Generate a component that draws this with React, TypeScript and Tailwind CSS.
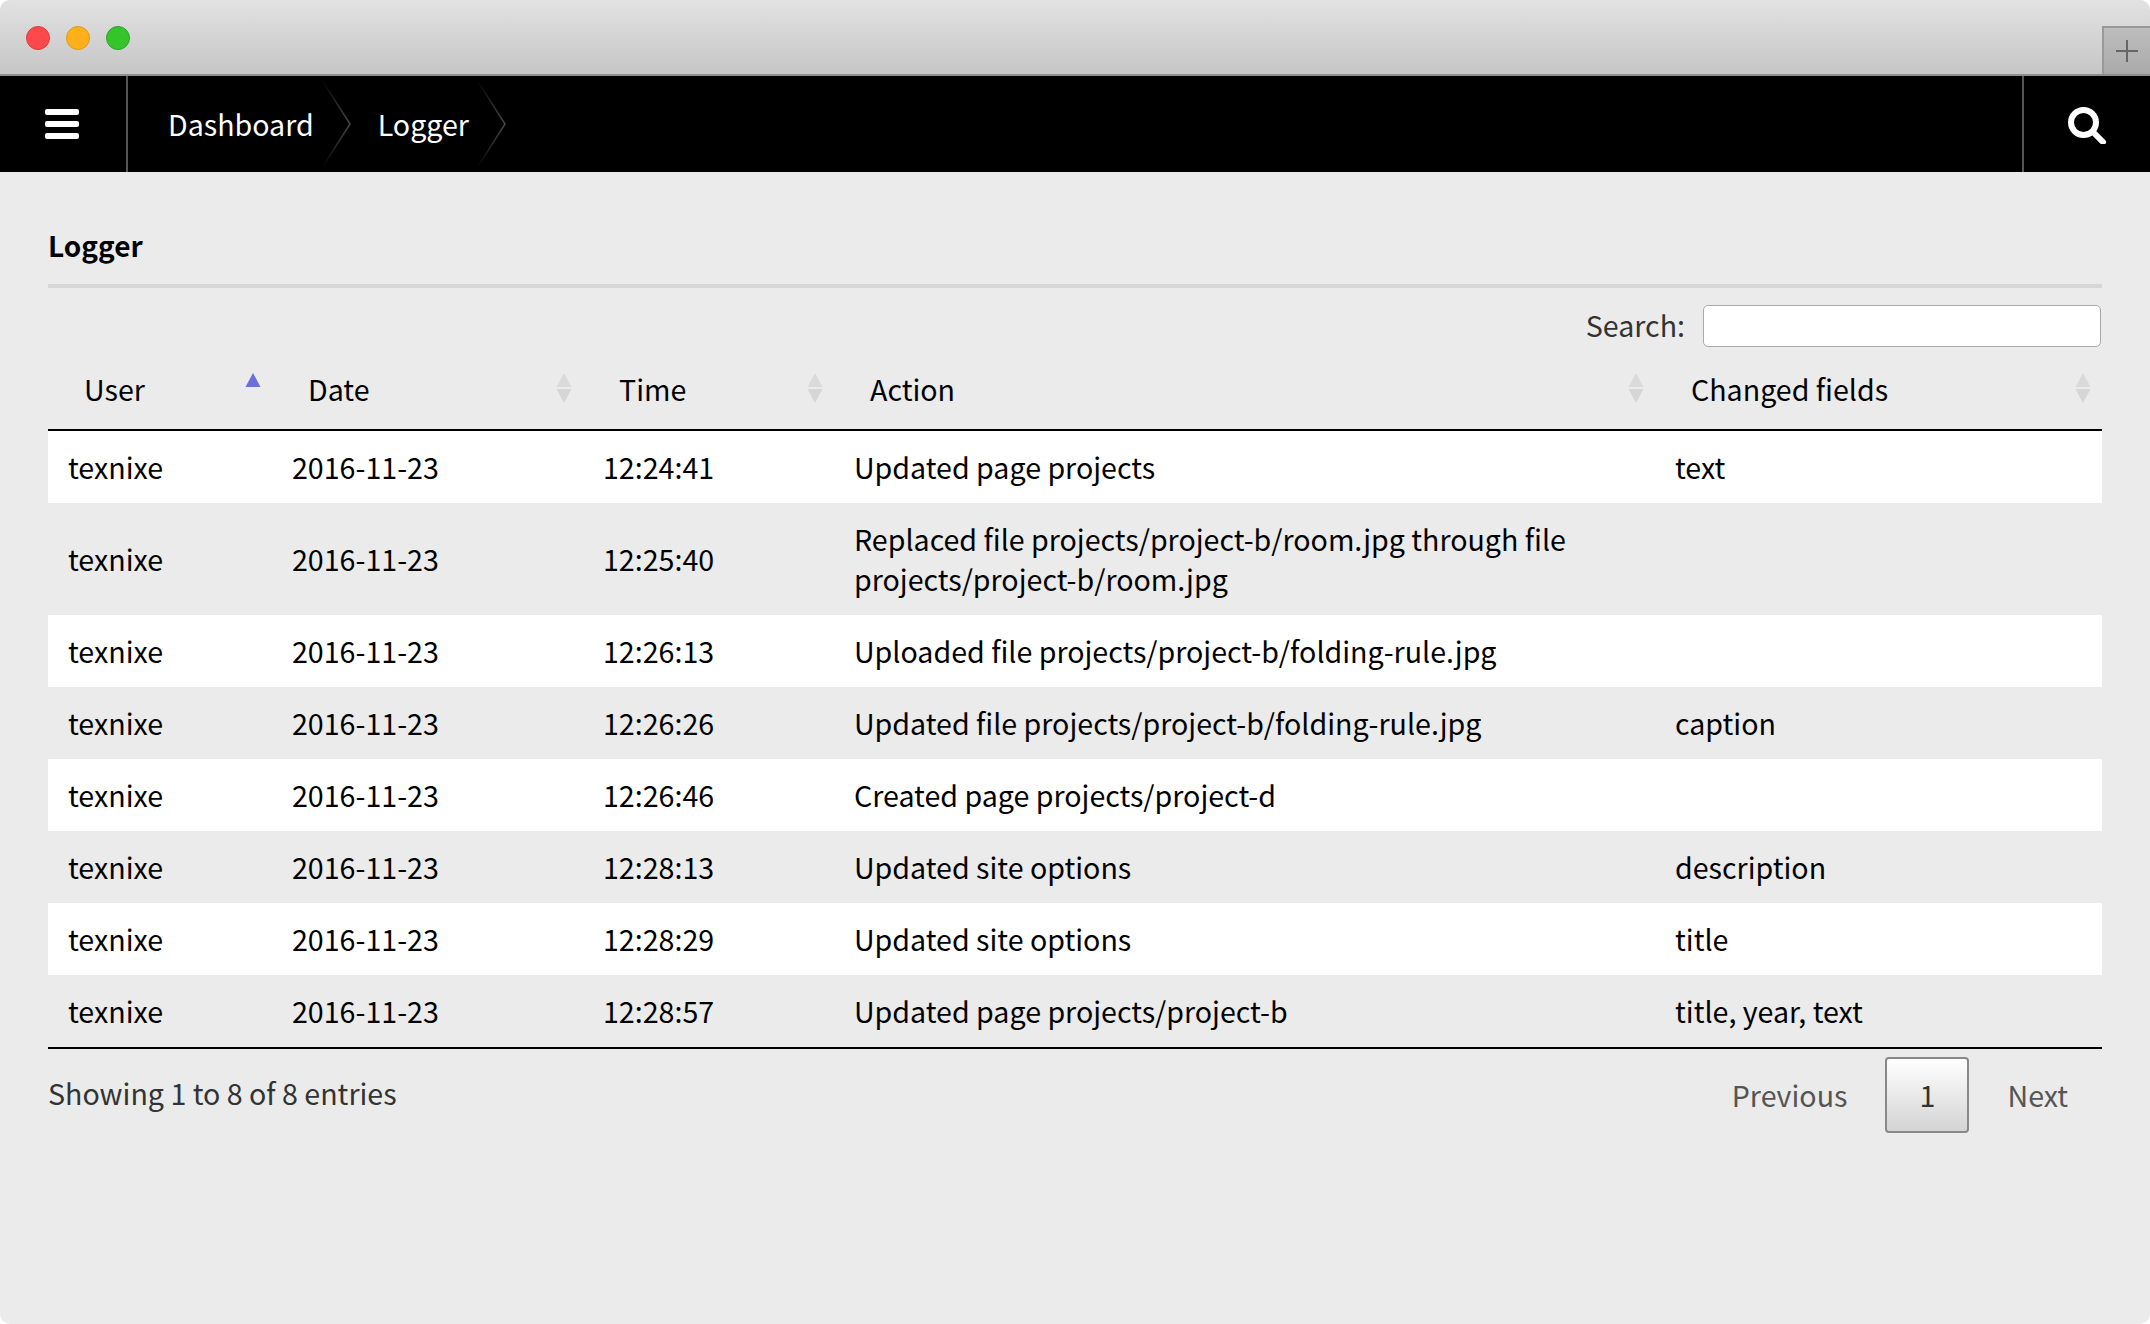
const rows = [
  { time: '12:24:41', action: 'Updated page projects', fields: 'text' },
  { time: '12:25:40', action: 'Replaced file projects/project-b/room.jpg through file projects/project-b/room.jpg', fields: '' },
  { time: '12:26:13', action: 'Uploaded file projects/project-b/folding-rule.jpg', fields: '' },
  { time: '12:26:26', action: 'Updated file projects/project-b/folding-rule.jpg', fields: 'caption' },
  { time: '12:26:46', action: 'Created page projects/project-d', fields: '' },
  { time: '12:28:13', action: 'Updated site options', fields: 'description' },
  { time: '12:28:29', action: 'Updated site options', fields: 'title' },
  { time: '12:28:57', action: 'Updated page projects/project-b', fields: 'title, year, text' },
]

const columns = ['User', 'Date', 'Time', 'Action', 'Changed fields']

function SortIcon({ active }: { active: boolean }) {
  return (
    <svg width="18" height="30" viewBox="0 0 18 30" className="absolute top-[26px] right-[10px]">
      <path d="M9 0 L16.5 14 L1.5 14 Z" fill={active ? '#6a6fdd' : '#dadada'} />
      {!active && <path d="M1.5 16 L16.5 16 L9 30 Z" fill="#d6d6d6" />}
    </svg>
  )
}

function Crumb({ label, id }: { label: string; id: string }) {
  return (
    <div className="flex items-center h-full">
      <span className="text-white">{label}</span>
      <svg width="30" height="96" viewBox="0 0 30 96" className="ml-[7px] mr-[27px]">
        <defs>
          <linearGradient id={id} x1="0" y1="0" x2="0" y2="96" gradientUnits="userSpaceOnUse">
            <stop offset="0.05" stopColor="#000000" />
            <stop offset="0.5" stopColor="#4a4a4a" />
            <stop offset="0.95" stopColor="#000000" />
          </linearGradient>
        </defs>
        <path d="M1 4 L29 48 L1 92" fill="none" stroke={`url(#${id})`} strokeWidth="1.5" />
      </svg>
    </div>
  )
}

export default function App() {
  return (
    <div className="w-[2150px] h-[1324px] bg-white overflow-hidden font-['Noto_Sans_CJK_JP','Source_Sans_Pro',sans-serif] text-[28.6px] text-black">
      <div className="h-full rounded-[10px] overflow-hidden bg-[#ebebeb] flex flex-col">
        {/* Window title bar */}
        <div className="h-[76px] shrink-0 flex justify-between border-b-2 border-[#8e8e8e] bg-gradient-to-b from-[#e2e2e2] to-[#c6c6c6]">
          <div className="flex items-center gap-[16px] pl-[26px] pt-[2px]">
            <div className="w-[24px] h-[24px] rounded-full bg-[#fc4a4c] border border-[#e2393b]" />
            <div className="w-[24px] h-[24px] rounded-full bg-[#fdb01c] border border-[#de9a18]" />
            <div className="w-[24px] h-[24px] rounded-full bg-[#35c42c] border border-[#2aa524]" />
          </div>
          <div className="self-end w-[48px] h-[48px] flex items-center justify-center border-l-2 border-t-2 border-[#999999] bg-gradient-to-b from-[#bdbdbd] to-[#aaaaaa]">
            <svg width="22" height="22" viewBox="0 0 22 22">
              <path d="M11 0 V22 M0 11 H22" stroke="#666666" strokeWidth="2" />
            </svg>
          </div>
        </div>

        {/* Nav bar */}
        <div className="h-[96px] shrink-0 bg-black flex items-center">
          <div className="w-[128px] h-full flex items-center pl-[45px] border-r-2 border-[#555555]">
            <div className="w-[34px] flex flex-col gap-[6px]">
              <div className="h-[6px] rounded-[2px] bg-white" />
              <div className="h-[6px] rounded-[2px] bg-white" />
              <div className="h-[6px] rounded-[2px] bg-white" />
            </div>
          </div>
          <div className="flex-1 h-full flex items-center pl-[40px]">
            <Crumb label="Dashboard" id="crumb-a" />
            <Crumb label="Logger" id="crumb-b" />
          </div>
          <div className="w-[128px] h-full flex items-center justify-center border-l-2 border-[#555555]">
            <svg width="40" height="40" viewBox="0 0 40 40">
              <circle cx="16.5" cy="18.5" r="12.5" fill="none" stroke="white" strokeWidth="6" />
              <path d="M26 28 L36 38" stroke="white" strokeWidth="6" strokeLinecap="round" />
            </svg>
          </div>
        </div>

        {/* Content */}
        <div className="px-[48px]">
          <h1 className="pt-[50px] h-[116px] border-b-4 border-[#d6d6d6] text-[28px] font-semibold leading-[46px]">Logger</h1>
          <div className="flex justify-end items-center mt-[17px] h-[42px] text-[#333333]">
            <span className="mr-[18px] pb-[2px]">Search:</span>
            <input className="w-[398px] h-[42px] mr-[1px] bg-white border border-[#aaaaaa] rounded-[5px]" />
          </div>
          <table className="w-full table-fixed border-collapse">
            <colgroup>
              <col className="w-[224px]" />
              <col className="w-[311px]" />
              <col className="w-[251px]" />
              <col className="w-[821px]" />
              <col className="w-[447px]" />
            </colgroup>
            <thead>
              <tr className="h-[83px] border-b-2 border-black">
                {columns.map((c, i) => (
                  <th key={c} className="relative pl-[36px] pt-[2px] font-normal text-left">
                    {c}
                    <SortIcon active={i === 0} />
                  </th>
                ))}
              </tr>
            </thead>
            <tbody className="border-b-2 border-black">
              {rows.map((r, i) => (
                <tr key={r.time} className={i % 2 === 0 ? 'bg-white' : ''}>
                  <td className="px-[20px] py-[16px] leading-[40px]">texnixe</td>
                  <td className="px-[20px] py-[16px] leading-[40px]">2016-11-23</td>
                  <td className="px-[20px] py-[16px] leading-[40px]">{r.time}</td>
                  <td className="px-[20px] py-[16px] leading-[40px]">{r.action}</td>
                  <td className="px-[20px] py-[16px] leading-[40px]">{r.fields}</td>
                </tr>
              ))}
            </tbody>
          </table>
          <div className="flex justify-between items-start mt-[8px]">
            <div className="mt-[13px] text-[#333333] leading-[46px]">Showing 1 to 8 of 8 entries</div>
            <div className="flex items-center text-[#555555] pr-[34px]">
              <span>Previous</span>
              <span className="ml-[38px] mr-[38px] w-[84px] h-[76px] flex items-center justify-center rounded-[4px] border-2 border-[#888888] bg-gradient-to-b from-white to-[#d4d4d4] text-[#333333]">1</span>
              <span>Next</span>
            </div>
          </div>
        </div>
      </div>
    </div>
  )
}
